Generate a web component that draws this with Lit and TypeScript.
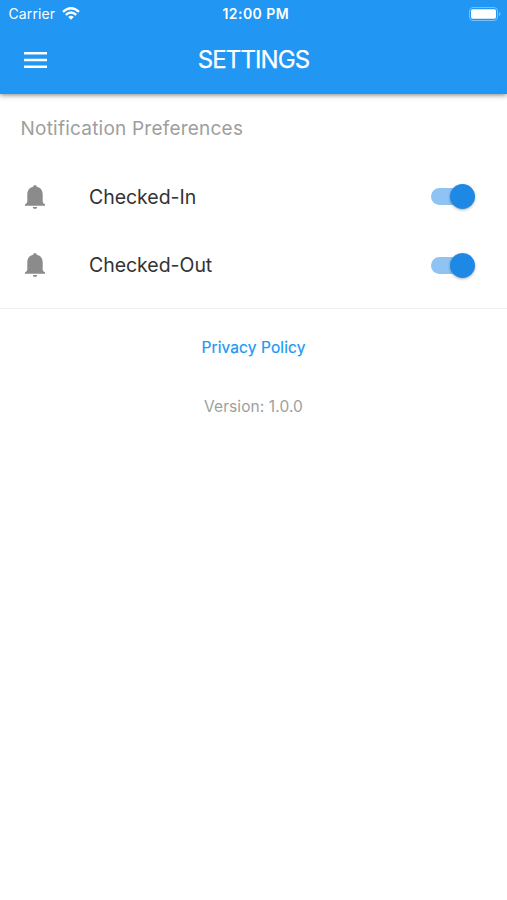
import { LitElement, html, css } from "lit";
import { customElement, property } from "lit/decorators.js";

@customElement("toggle-row")
class ToggleRow extends LitElement {
  @property() label = "";

  static styles = css`
    :host { display: flex; align-items: center; height: 68.4px; padding: 0 32px 0 25px; }
    .bell { width: 20px; height: 24px; margin-right: 44px; }
    .label { flex: 1; font-size: 19.5px; letter-spacing: -0.04px; color: #333; white-space: nowrap; }
    .switch { position: relative; width: 44px; height: 26px; display: flex; align-items: center; }
    .track { width: 40px; height: 17px; border-radius: 9px; background: #8ec3f3; }
    .thumb { position: absolute; right: 0; top: 0.5px; width: 25px; height: 25px; border-radius: 50%; background: #1e88e5; box-shadow: 0 1px 3px rgba(0,0,0,.3); }
  `;

  render() {
    return html`
      <svg class="bell" viewBox="0 0 20 24"><path fill="#8b8b8b" d="M10 0C11 0 11.6.8 11.8 1.8C15.8 2.8 17.7 5.6 17.7 9.5V16.2C17.7 17.8 18.4 18.6 20 19.2V20.7H0V19.2C1.6 18.6 2.3 17.8 2.3 16.2V9.5C2.3 5.6 4.2 2.8 8.2 1.8C8.4.8 9 0 10 0ZM7.7 22H12.3C12 23.3 11.1 24 10 24S8 23.3 7.7 22Z"/></svg>
      <span class="label">${this.label}</span>
      <span class="switch"><span class="track"></span><span class="thumb"></span></span>
    `;
  }
}

@customElement("app-root")
class AppRoot extends LitElement {
  static styles = css`
    :host { display: block; height: 900px; background: #fff; font-family: Inter, "Liberation Sans", sans-serif; overflow: hidden; }
    .top { height: 94px; background: #2196f3; color: #fff; box-shadow: 0 1px 5px rgba(0,0,0,.5); }
    .status { height: 27px; display: grid; grid-template-columns: 1fr auto 1fr; align-items: center; padding: 0 6px 0 8.5px; font-size: 14px; }
    .carrier { display: flex; align-items: center; gap: 7px; letter-spacing: 0.12px; }
    .wifi { width: 18px; height: 13px; }
    .time { font-weight: 600; letter-spacing: 0.45px; padding-left: 2px; }
    .battery { width: 32px; height: 14px; justify-self: end; }
    .bar { height: 65px; display: grid; grid-template-columns: 1fr auto 1fr; align-items: center; padding: 0 24px; }
    .menu { width: 23px; height: 16px; }
    .title { font-size: 24px; font-weight: 400; letter-spacing: -0.9px; -webkit-text-stroke: 0.25px #fff; }
    .heading { height: 68.6px; padding: 0 20.5px; display: flex; align-items: center; font-size: 19px; letter-spacing: 0.22px; color: #9e9e9e; }
    .prefs { border-bottom: 1px solid #efefef; padding-bottom: 8.6px; }
    .footer { display: flex; flex-direction: column; align-items: center; font-size: 15.5px; }
    .link { color: #2196f3; margin-top: 29px; line-height: 20px; letter-spacing: 0.1px; -webkit-text-stroke: 0.2px #2196f3; }
    .version { color: #9e9e9e; margin-top: 39px; line-height: 20px; letter-spacing: 0.1px; }
  `;

  render() {
    return html`
      <header class="top">
        <div class="status">
          <span class="carrier">Carrier
            <svg class="wifi" viewBox="0 0 18 13" fill="none" stroke="#fff" stroke-width="2.3"><path d="M1 4.8Q9-2.2 17 4.8M3.8 7.8Q9 3.2 14.2 7.8"/><path d="M6.2 10Q9 7.6 11.8 10L9 12.8z" fill="#fff" stroke="none"/></svg>
          </span>
          <span class="time">12:00 PM</span>
          <svg class="battery" viewBox="0 0 32 14"><rect x=".5" y=".5" width="28" height="13" rx="3.5" fill="none" stroke="#79c0f8"/><rect x="2" y="2.3" width="25" height="9.4" rx="1.6" fill="#fff"/><path d="M30 5v4q1.5-.5 1.5-2T30 5z" fill="#79c0f8"/></svg>
        </div>
        <div class="bar">
          <svg class="menu" viewBox="0 0 23 16"><path fill="#fff" d="M0 0h23v2.6H0zM0 6.7h23v2.6H0zM0 13.4h23V16H0z"/></svg>
          <span class="title">SETTINGS</span>
        </div>
      </header>
      <section class="prefs">
        <div class="heading">Notification Preferences</div>
        <toggle-row label="Checked-In"></toggle-row>
        <toggle-row label="Checked-Out"></toggle-row>
      </section>
      <footer class="footer"><span class="link">Privacy Policy</span><span class="version">Version: 1.0.0</span></footer>
    `;
  }
}
